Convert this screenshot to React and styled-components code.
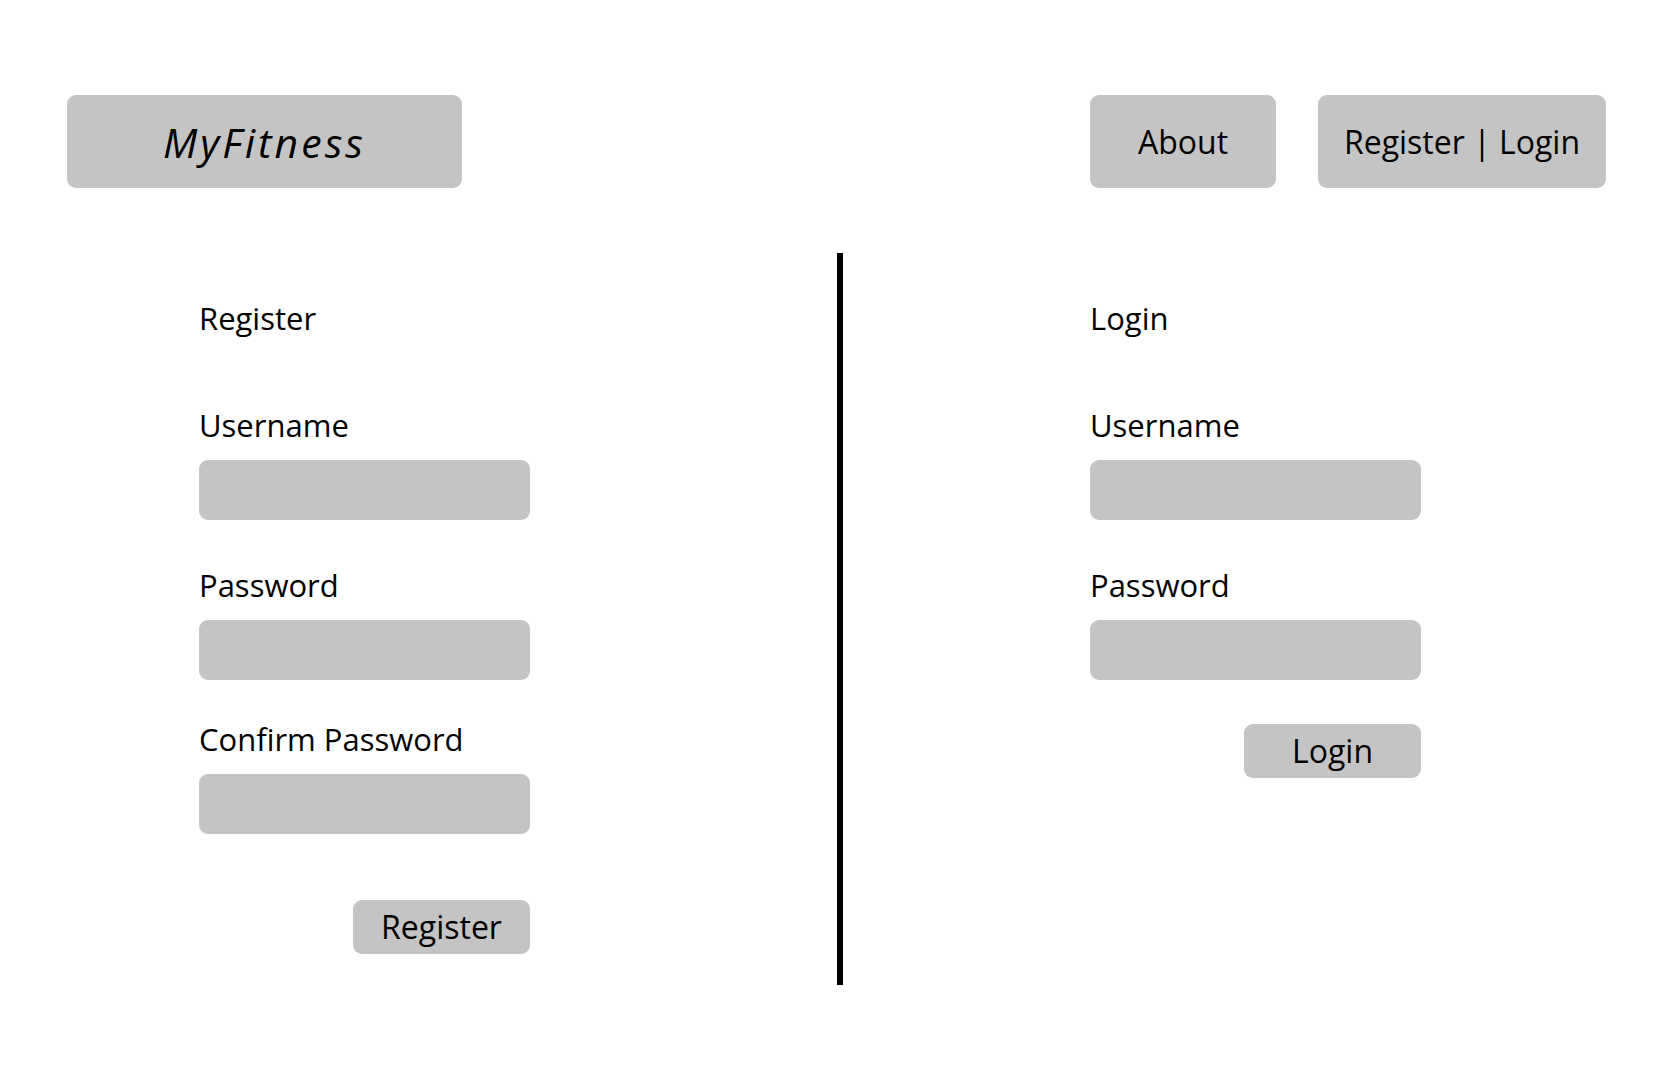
import styled, { createGlobalStyle } from 'styled-components'

const GlobalStyle = createGlobalStyle`
  * { box-sizing: border-box; }
  body {
    margin: 0;
    background: #fff;
    font-family: "Open Sans", Lato, sans-serif;
    color: #000;
  }
`

const Page = styled.div`
  width: 1670px;
  min-height: 1080px;
`

const Header = styled.header`
  display: flex;
  align-items: center;
  justify-content: space-between;
  padding: 95px 64px 0 67px;
`

const Logo = styled.div`
  width: 395px;
  height: 93px;
  display: flex;
  align-items: center;
  justify-content: center;
  background: #c4c4c4;
  border-radius: 9px;
  font-size: 41px;
  font-style: italic;
  letter-spacing: 3px;
`

const Nav = styled.nav`
  display: flex;
  gap: 42px;
`

const NavButton = styled.button`
  width: ${p => p.$w}px;
  height: 93px;
  border: none;
  border-radius: 9px;
  background: #c4c4c4;
  font-family: inherit;
  font-size: 32px;
  color: #000;
`

const Main = styled.main`
  display: grid;
  grid-template-columns: 837px 6px 1fr;
  margin-top: 65px;
`

const Divider = styled.div`
  width: 6px;
  height: 732px;
  background: #000;
`

const Form = styled.form`
  display: flex;
  flex-direction: column;
  width: 331px;
  margin-left: ${p => p.$left}px;
  padding-top: 45px;
`

const Heading = styled.h2`
  margin: 0 0 67px;
  font-size: 31px;
  font-weight: 400;
  line-height: 40px;
`

const Label = styled.label`
  display: block;
  margin-bottom: 15px;
  font-size: 31px;
  line-height: 40px;
`

const Input = styled.input`
  display: block;
  width: 331px;
  height: 60px;
  border: none;
  border-radius: 9px;
  background: #c4c4c4;
  margin-bottom: ${p => p.$after}px;
`

const Submit = styled.button`
  align-self: flex-end;
  width: 177px;
  height: 54px;
  border: none;
  border-radius: 9px;
  background: #c4c4c4;
  font-family: inherit;
  font-size: 32px;
  line-height: 1;
  color: #000;
`

function Field({ label, type = 'text', after }) {
  return (
    <>
      <Label>{label}</Label>
      <Input type={type} $after={after} />
    </>
  )
}

export default function App() {
  return (
    <Page>
      <GlobalStyle />
      <Header>
        <Logo>MyFitness</Logo>
        <Nav>
          <NavButton $w={186}>About</NavButton>
          <NavButton $w={288}>Register | Login</NavButton>
        </Nav>
      </Header>
      <Main>
        <Form $left={199} onSubmit={e => e.preventDefault()}>
          <Heading>Register</Heading>
          <Field label="Username" after={45} />
          <Field label="Password" type="password" after={39} />
          <Field label="Confirm Password" type="password" after={66} />
          <Submit>Register</Submit>
        </Form>
        <Divider />
        <Form $left={247} onSubmit={e => e.preventDefault()}>
          <Heading>Login</Heading>
          <Field label="Username" after={45} />
          <Field label="Password" type="password" after={44} />
          <Submit>Login</Submit>
        </Form>
      </Main>
    </Page>
  )
}
